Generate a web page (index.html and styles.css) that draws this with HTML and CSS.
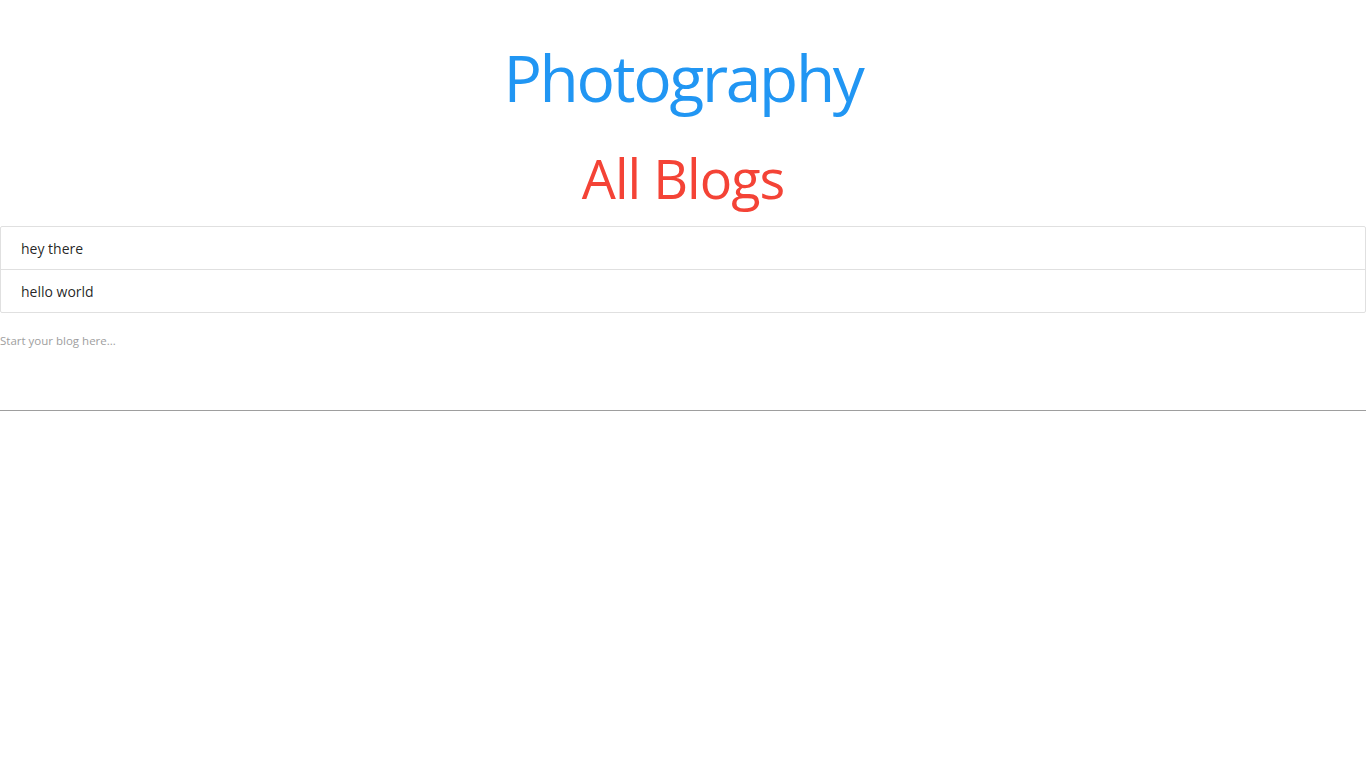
FILE: index.html
```html
<!DOCTYPE html>
<html lang="en">
<head>
<meta charset="utf-8">
<title>Photography</title>
<link rel="stylesheet" href="styles.css">
</head>
<body>
<main class="page">
  <h1 class="site-title">Photography</h1>
  <h2 class="section-title">All Blogs</h2>
  <ul class="collection">
    <li class="collection-item">hey there</li>
    <li class="collection-item">hello world</li>
  </ul>
  <textarea class="blog-input" placeholder="Start your blog here..."></textarea>
</main>
</body>
</html>
```
FILE: styles.css
```css
html, body {
  margin: 0;
  padding: 0;
  background: #fff;
}
body {
  font-family: "Open Sans", "Noto Sans", sans-serif;
  color: rgba(0, 0, 0, 0.87);
}
.page {
  display: block;
}
.site-title {
  margin: 43px 0 0;
  font-size: 64px;
  line-height: 70px;
  font-weight: 400;
  text-align: center;
  color: #2196f3;
  letter-spacing: -2.3px;
}
.section-title {
  margin: 35px 0 0;
  font-size: 54px;
  line-height: 60px;
  font-weight: 400;
  text-align: center;
  color: #f44336;
  letter-spacing: -1px;
}
.collection {
  list-style: none;
  margin: 18px 0 15px;
  padding: 0;
  border: 1px solid #e0e0e0;
  border-radius: 2px;
}
.collection-item {
  padding: 11px 20px 9px;
  line-height: 22px;
  font-size: 14px;
  border-bottom: 1px solid #e0e0e0;
}
.collection-item:last-child {
  border-bottom: none;
}
.blog-input {
  display: block;
  width: 100%;
  box-sizing: border-box;
  height: 83px;
  margin: 0;
  padding: 5px 0 0;
  border: none;
  border-bottom: 1px solid #9e9e9e;
  outline: none;
  resize: none;
  font-family: "Open Sans", "Noto Sans", sans-serif;
  font-size: 11.5px;
  line-height: 16px;
  color: rgba(0, 0, 0, 0.87);
  background: transparent;
}
.blog-input::placeholder {
  color: #9e9e9e;
}
```
